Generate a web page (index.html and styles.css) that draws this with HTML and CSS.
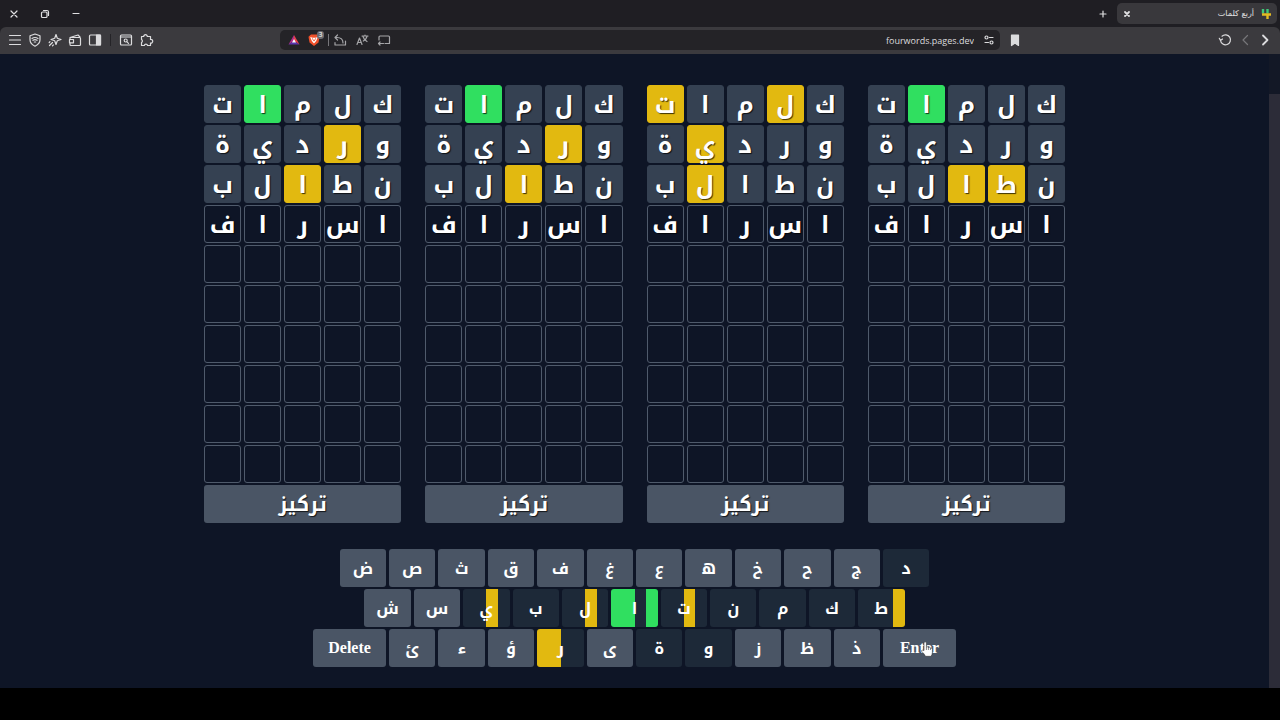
FILE: index.html
```html
<!DOCTYPE html>
<html lang="en">
<head>
    <meta charset="UTF-8">
    <meta name="viewport" content="width=device-width, initial-scale=1.0">
    <title>أربع كلمات</title>
    <link rel="stylesheet" href="styles.css">
</head>
<body>
    <header class="tabs">
        <div class="window-buttons">
            <button class="icon" aria-label="Close window"><svg viewBox="0 0 16 16"><path d="M5 5l6 6M11 5l-6 6"/></svg></button>
            <button class="icon" aria-label="Restore window"><svg viewBox="0 0 16 16"><rect x="4.5" y="6" width="5.5" height="5.5" rx="1"/><path d="M6.5 4.5H10a1.5 1.5 0 0 1 1.5 1.5v3.5"/></svg></button>
            <button class="icon" aria-label="Minimize window"><svg viewBox="0 0 16 16"><path d="M5 7.5h6"/></svg></button>
        </div>
        <button class="icon new-tab" aria-label="New tab"><svg viewBox="0 0 16 16"><path d="M8 5v6M5 8h6"/></svg></button>
        <div class="tab">
            <button class="icon" aria-label="Close tab"><svg class="bold" viewBox="0 0 16 16"><path d="M6 6l4 4M10 6l-4 4"/></svg></button>
            <span class="tab-title" dir="rtl">أربع كلمات</span>
            <svg class="favicon" viewBox="0 0 12 12"><path d="M3 1v4.500M7.500 1v4.500" stroke="#3fc878"/><path d="M2 6.500h9M7.500 5.500v5.500" stroke="#e3bb22"/></svg>
        </div>
    </header>

    <nav class="toolbar">
        <div class="tools">
            <button class="icon" aria-label="Menu"><svg viewBox="0 0 16 16"><path d="M2.500 3.500h11M2.500 8h11M2.500 12.500h11"/></svg></button>
            <button class="icon" aria-label="VPN"><svg viewBox="0 0 16 16"><path d="M8 2l5 1.800v4c0 3-2 5-5 6.400-3-1.400-5-3.400-5-6.400v-4z"/><path d="M5 6.500q3-2 6 0M6 8.300q2-1.300 4 0M7.300 10h1.400"/></svg></button>
            <button class="icon" aria-label="Leo"><svg viewBox="0 0 16 16"><path d="M9 2.500l1.300 3.700L14 7.500l-3.700 1.300L9 12.500 7.700 8.800 4 7.500l3.700-1.300z"/><path d="M5.500 10.500l-3 3M3 9.700l-.8.800M6.300 13l-.8.800"/></svg></button>
            <button class="icon" aria-label="Wallet"><svg viewBox="0 0 16 16"><path d="M3 7V5.500L11 3l2 2v.5M3 5.500h9.500a1 1 0 0 1 1 1v6a1 1 0 0 1-1 1H4a1 1 0 0 1-1-1V11"/><path d="M2.500 7.500h4v3.300h-4z"/></svg></button>
            <button class="icon" aria-label="Sidebar"><svg viewBox="0 0 16 16"><rect x="2.500" y="3" width="11" height="10" rx="1"/><path class="solid" d="M9.500 3h4v10h-4z"/></svg></button>
            <span class="divider"></span>
            <button class="icon" aria-label="Search tabs"><svg viewBox="0 0 16 16"><rect x="2.500" y="3" width="11" height="10" rx="1"/><path d="M2.500 5h11"/><circle cx="7.700" cy="8.500" r="1.500"/><path d="M9 9.800l1.500 1.500"/></svg></button>
            <button class="icon" aria-label="Extensions"><svg viewBox="0 0 16 16"><path d="M3.500 4.500h2.200a1.800 1.800 0 1 1 3.600 0h3.200v3a1.800 1.800 0 1 1 0 3.500v2.500H9.600a1.700 1.700 0 0 0-3.300 0H3.500v-3a1.700 1.700 0 0 0 0-3z"/></svg></button>
        </div>
        <div class="address">
            <button class="icon" aria-label="Rewards"><svg viewBox="0 0 16 16"><path d="M8 3v6l5.500 3.500z" fill="#e8404a" stroke="none"/><path d="M8 3v6l-5.500 3.500z" fill="#b02f8a" stroke="none"/><path d="M2.500 12.500h11L8 9z" fill="#5b35b0" stroke="none"/><path d="M8 7l-2 3.500h4z" fill="#fff" stroke="none"/></svg></button>
            <button class="icon shields" aria-label="Shields"><svg viewBox="0 0 16 16"><path d="M5 2.500h6l2.500 2.300-1 5.700L8 14l-4.500-3.500-1-5.700z" fill="#f0502a" stroke="none"/><path d="M5 5.500l1.300 3L8 10.500l1.700-2 1.300-3M7 6l1 1.500L9 6" stroke="#fff"/></svg><span class="badge">3</span></button>
            <span class="divider light"></span>
            <button class="icon dim" aria-label="Share"><svg viewBox="0 0 16 16"><path d="M5.500 3L3 5.500 5.500 8M3 5.500h2c4 0 6 2 6 5.500M3 10.500V13h10.500V9"/></svg></button>
            <button class="icon dim" aria-label="Translate"><svg viewBox="0 0 16 16"><path d="M3 12.500L5.500 6 8 12.500M4 10.500h3M8 4h6M11 3v1M9 4.500q1 3.500 4 5M13 4.500q-.8 3-3.700 4.500"/></svg></button>
            <button class="icon dim" aria-label="Cast"><svg viewBox="0 0 16 16"><path d="M3 8V5a1 1 0 0 1 1-1h8.500a1 1 0 0 1 1 1v6.500H9M2.500 11.500h5M4 10l-1.500 1.500L4 13"/></svg></button>
            <input class="url" type="text" aria-label="Address" value="fourwords.pages.dev">
            <button class="icon settings" aria-label="Site settings"><svg viewBox="0 0 16 16"><circle cx="5.500" cy="5.500" r="1.500"/><path d="M8.500 5.500H12M4 10.500h3.500"/><circle cx="10.500" cy="10.500" r="1.500"/></svg></button>
        </div>
        <div class="history">
            <button class="icon" aria-label="Bookmark"><svg viewBox="0 0 16 16"><path class="solid" d="M4.500 3h7v10.500L8 11l-3.500 2.500z"/></svg></button>
            <button class="icon reload" aria-label="Reload"><svg viewBox="0 0 16 16"><path d="M3.500 8.500A5 5 0 1 0 5 4.200M3.500 8.500L2.300 6.300M3.500 8.500l2-1.500"/></svg></button>
            <button class="icon faint" aria-label="Forward"><svg viewBox="0 0 16 16"><path d="M10.500 3.500L6 8l4.500 4.500"/></svg></button>
            <button class="icon" aria-label="Back"><svg class="bold" viewBox="0 0 16 16"><path d="M6 3.500L10.500 8 6 12.500"/></svg></button>
        </div>
    </nav>

    <div class="page">
        <main class="game">
            <div class="boards" id="boards"></div>

            <div class="keyboard">
                <div class="row">
                    <button class="key">ض</button>
                    <button class="key">ص</button>
                    <button class="key">ث</button>
                    <button class="key">ق</button>
                    <button class="key">ف</button>
                    <button class="key">غ</button>
                    <button class="key">ع</button>
                    <button class="key">ه</button>
                    <button class="key">خ</button>
                    <button class="key">ح</button>
                    <button class="key">ج</button>
                    <button class="key used">د</button>
                </div>
                <div class="row">
                    <button class="key">ش</button>
                    <button class="key">س</button>
                    <button class="key third">ي</button>
                    <button class="key used">ب</button>
                    <button class="key third">ل</button>
                    <button class="key alif">ا</button>
                    <button class="key third">ت</button>
                    <button class="key used">ن</button>
                    <button class="key used">م</button>
                    <button class="key used">ك</button>
                    <button class="key fourth">ط</button>
                </div>
                <div class="row">
                    <button class="key wide">Delete</button>
                    <button class="key">ئ</button>
                    <button class="key">ء</button>
                    <button class="key">ؤ</button>
                    <button class="key first-half">ر</button>
                    <button class="key">ى</button>
                    <button class="key used">ة</button>
                    <button class="key used">و</button>
                    <button class="key">ز</button>
                    <button class="key">ظ</button>
                    <button class="key">ذ</button>
                    <button class="key wide">Enter
                        <svg class="pointer" viewBox="0 0 16 16"><path d="M5 9.500V2a1.200 1.200 0 0 1 2.400 0v4q1.200-.6 2 .4 1.300-.5 2 .5 1.800-.2 2 1.400v3q0 2-1.300 4H6.500Q5 12.500 2.300 10q.6-1.700 2.700-.5z"/><path d="M7.400 6v3M9.400 6.400v2.600M11.400 6.900v2.100"/></svg>
                    </button>
                </div>
            </div>
        </main>
        <div class="scrollbar"><div class="thumb"></div></div>
    </div>
    <footer class="bottom"></footer>

    <script>
const ROWS = 10;
const COLS = 5;
const guesses = ['كلمات', 'وردية', 'نطالب'];
const current = 'اسراف';

// g = right place, y = wrong place, - = not in the word
const results = [
    ['---g-', '-y---', '--y--'],
    ['---g-', '-y---', '--y--'],
    ['-y--y', '---y-', '---y-'],
    ['---g-', '-----', '-yy--']
];
const colors = { g: 'correct', y: 'present', '-': 'absent' };

const boards = document.getElementById('boards');

results.forEach(result => {
    const board = document.createElement('section');
    board.className = 'board';

    for (let r = 0; r < ROWS; r++) {
        for (let c = 0; c < COLS; c++) {
            const cell = document.createElement('div');
            cell.className = 'cell';
            if (r < guesses.length) {
                cell.classList.add(colors[result[r][c]]);
                cell.textContent = guesses[r][c];
            } else if (r === guesses.length) {
                cell.textContent = current[c];
            }
            board.appendChild(cell);
        }
    }

    const focus = document.createElement('button');
    focus.className = 'focus';
    focus.textContent = 'تركيز';
    board.appendChild(focus);
    boards.appendChild(board);
});
    </script>
</body>
</html>
```
FILE: styles.css
```css
* {
    box-sizing: border-box;
}
body {
    margin: 0;
    min-height: 100vh;
    display: flex;
    flex-direction: column;
    background-color: #1f1e23;
    font-family: "Noto Kufi Arabic", "Noto Sans Arabic", "Noto Sans", sans-serif;
}
button {
    border: none;
    padding: 0;
    margin: 0;
    color: inherit;
    font-family: inherit;
    cursor: pointer;
}

/* browser bars */
.tabs {
    display: flex;
    align-items: center;
    height: 27px;
    padding: 0 3px 0 4px;
    color: #e0e0e2;
}
.window-buttons {
    display: flex;
    gap: 11px;
    flex: 1;
}
.new-tab {
    margin-right: 4px;
}
.tab {
    display: flex;
    align-items: center;
    width: 160px;
    height: 21px;
    padding-right: 5px;
    border-radius: 5px;
    background-color: #39383c;
}
.tab-title {
    flex: 1;
    padding: 0 6px;
    font-family: "DejaVu Sans", sans-serif;
    font-size: 8px;
}
.favicon {
    width: 12px;
    height: 12px;
    fill: none;
    stroke-width: 2.4;
}
.icon {
    display: flex;
    align-items: center;
    justify-content: center;
    flex: none;
    width: 20px;
    height: 20px;
    background: none;
}
.icon svg {
    width: 16px;
    height: 16px;
    fill: none;
    stroke: currentColor;
    stroke-width: 1.2;
    stroke-linecap: round;
    stroke-linejoin: round;
}
.icon svg.bold {
    stroke-width: 1.8;
}
.icon .solid {
    fill: currentColor;
}
.dim {
    margin-right: 2px;
    color: #a5a5a8;
}
.faint {
    color: #77767a;
}
.toolbar {
    display: grid;
    grid-template-columns: 280px 1fr 280px;
    align-items: center;
    height: 27px;
    padding-bottom: 1px;
    border-radius: 6px 6px 0 0;
    background-color: #3b3a3e;
    color: #dcdcde;
}
.tools {
    display: flex;
    align-items: center;
    padding-left: 5px;
}
.divider {
    width: 1px;
    height: 12px;
    margin: 0 5px;
    background-color: #242327;
}
.divider.light {
    margin: 0 1px 0 4px;
    background-color: #77767a;
}
.address {
    display: flex;
    align-items: center;
    height: 20px;
    padding: 0 1px 0 4px;
    border-radius: 5px;
    background-color: #242327;
}
.shields {
    position: relative;
}
.badge {
    position: absolute;
    top: 1px;
    right: 0;
    width: 7px;
    border-radius: 3px;
    background-color: #6b6a6f;
    color: #fff;
    font-family: "Open Sans", sans-serif;
    font-size: 7px;
    line-height: 8px;
}
.url {
    flex: 1;
    min-width: 0;
    border: none;
    padding: 0 5px;
    background: none;
    color: #dcdcde;
    font-family: "Open Sans", sans-serif;
    font-size: 9px;
    text-align: right;
    outline: none;
}
.history {
    display: flex;
    padding: 0 5px;
}
.reload {
    margin-left: auto;
}

/* game */
.page {
    display: flex;
    flex: 1;
    background-color: #0e1526;
}
.game {
    flex: 1;
    padding: 31px 24px 20px;
    color: #fff;
}
.boards {
    display: grid;
    grid-template-columns: repeat(4, 1fr);
    gap: 24px;
    max-width: 861px;
    margin: 0 auto 26px;
}
.board {
    display: grid;
    grid-template-columns: repeat(5, 1fr);
    gap: 2px 3px;
    direction: rtl;
}
.cell {
    display: flex;
    align-items: center;
    justify-content: center;
    min-width: 0;
    height: 38px;
    padding-top: 2px;
    border: 1px solid #4f5a6b;
    border-radius: 3px;
    font-size: 24px;
    font-weight: bold;
    line-height: 32px;
    text-shadow: 1px 1px 1px #000b;
}
.absent {
    border-color: #354152;
    background-color: #354152;
}
.correct {
    border-color: #30df60;
    background-color: #30df60;
}
.present {
    border-color: #e2b910;
    background-color: #e2b910;
}
.focus {
    grid-column: 1 / -1;
    height: 38px;
    border-radius: 3px;
    background-color: #4a5565;
    font-size: 20px;
    font-weight: bold;
    line-height: 32px;
    text-shadow: 1px 1px 1px #000b;
}
.keyboard {
    display: flex;
    flex-direction: column;
    gap: 2px;
    max-width: 643px;
    margin: 0 auto;
}
.row {
    display: flex;
    justify-content: center;
    gap: 3px;
}
.key {
    flex: 0 0 calc((100% - 179px) / 10);
    height: 38px;
    border-radius: 3px;
    background-color: #4a5565;
    font-size: 16px;
    font-weight: bold;
}
.wide {
    position: relative;
    flex-basis: 73px;
    font-family: "Liberation Serif", serif;
}
.used {
    background-color: #1d2938;
}
/* each quarter of a key stands for one board */
.first-half {
    background: linear-gradient(to right, #e2b910 50%, #1d2938 50%);
}
.third {
    background: linear-gradient(to right, #1d2938 50%, #e2b910 50%, #e2b910 75%, #1d2938 75%);
}
.fourth {
    background: linear-gradient(to right, #1d2938 75%, #e2b910 75%);
}
.alif {
    background: linear-gradient(to right, #30df60 50%, #1d2938 50%, #1d2938 75%, #30df60 75%);
}
.pointer {
    position: absolute;
    top: 12px;
    left: 36px;
    width: 16px;
    height: 16px;
    fill: #fff;
    stroke: #333;
    stroke-width: 0.6;
}
.scrollbar {
    width: 11px;
    padding-top: 40px;
    background-color: #131826;
}
.thumb {
    height: 100%;
    background-color: #2c2c38;
}
.bottom {
    height: 32px;
    background-color: #000;
}
```
